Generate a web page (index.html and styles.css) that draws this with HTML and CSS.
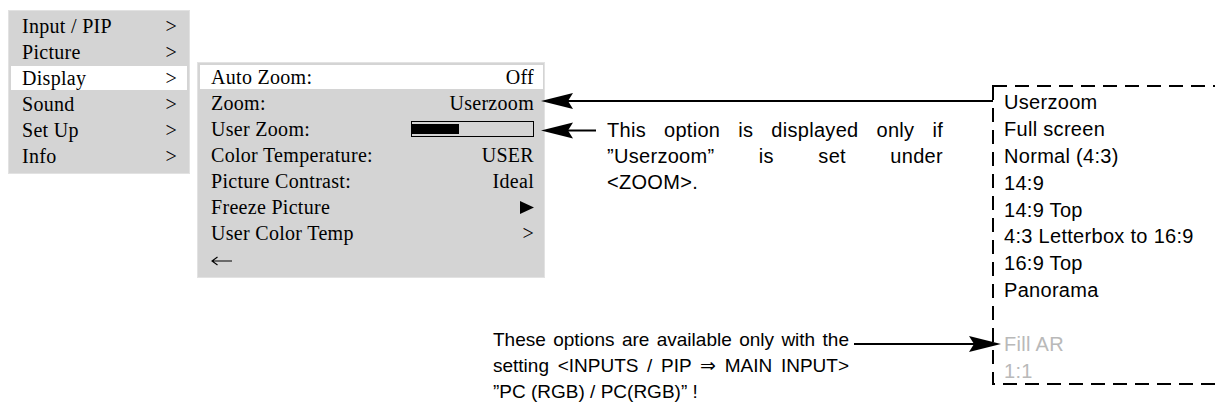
FILE: index.html
```html
<!DOCTYPE html>
<html lang="en">
<head>
  <meta charset="UTF-8" />
  <title>Display menu – Zoom</title>
  <link rel="stylesheet" href="styles.css">
</head>
<body>

  <div class="page">
    <div class="left">
      <div class="top">
        <ul class="menu">
          <li><span>Input / PIP</span><span>&gt;</span></li>
          <li><span>Picture</span><span>&gt;</span></li>
          <li class="active"><span>Display</span><span>&gt;</span></li>
          <li><span>Sound</span><span>&gt;</span></li>
          <li><span>Set Up</span><span>&gt;</span></li>
          <li><span>Info</span><span>&gt;</span></li>
        </ul>

        <ul class="menu sub">
          <li class="active"><span>Auto Zoom:</span><span>Off</span></li>
          <li><span>Zoom:</span><span>Userzoom</span></li>
          <li><span>User Zoom:</span><span class="bar"><span class="bar-fill"></span></span></li>
          <li><span>Color Temperature:</span><span>USER</span></li>
          <li><span>Picture Contrast:</span><span>Ideal</span></li>
          <li>
            <span>Freeze Picture</span>
            <svg class="play" width="14" height="13" viewBox="0 0 14 13"><polygon points="0,0 14,6.5 0,13" /></svg>
          </li>
          <li><span>User Color Temp</span><span>&gt;</span></li>
          <li>
            <svg class="back" width="21" height="10" viewBox="0 0 21 10" aria-label="back">
              <path d="M1 5 H21 M6.5 1 L1 5 L6.5 9" fill="none" stroke="#000" stroke-width="1.1" />
            </svg>
          </li>
        </ul>

        <p class="note note-zoom">
          <span class="line">This option is displayed only if</span>
          <span class="line">”Userzoom” is set under</span>
          <span class="line last">&lt;ZOOM&gt;.</span>
        </p>
      </div>

      <p class="note note-pc">
        <span class="line">These options are available only with the</span>
        <span class="line">setting &lt;INPUTS / PIP &rArr; MAIN INPUT&gt;</span>
        <span class="line last">”PC (RGB) / PC(RGB)” !</span>
      </p>
    </div>

    <div class="options">
      <ul>
        <li>Userzoom</li>
        <li>Full screen</li>
        <li>Normal (4:3)</li>
        <li>14:9</li>
        <li>14:9 Top</li>
        <li>4:3 Letterbox to 16:9</li>
        <li>16:9 Top</li>
        <li>Panorama</li>
        <li class="spacer"></li>
        <li class="off">Fill AR</li>
        <li class="off">1:1</li>
      </ul>
      <svg class="frame" width="228" height="300" viewBox="0 0 228 300">
        <rect x="1" y="1" width="226" height="298" fill="none" stroke="#000" stroke-width="2" stroke-dasharray="14 8" />
      </svg>
    </div>

    <!-- callout arrows -->
    <svg class="arrows" width="1215" height="408" viewBox="0 0 1215 408">
      <line x1="566" y1="101" x2="993" y2="101" stroke="#000" stroke-width="2" />
      <polygon points="541,101 573,93 568,101 573,109" />

      <line x1="566" y1="130.5" x2="596" y2="130.5" stroke="#000" stroke-width="2" />
      <polygon points="541,130.5 573,122.5 568,130.5 573,138.5" />

      <line x1="854" y1="344" x2="975" y2="344" stroke="#000" stroke-width="2" />
      <polygon points="1001,344 969,336 974,344 969,352" />
    </svg>
  </div>

</body>
</html>
```

FILE: styles.css
```css
* { box-sizing: border-box; }

body {
  margin: 0;
  background: #fff;
  color: #000;
}

.page {
  position: relative;
  width: 1215px;
  height: 408px;
  overflow: hidden;
  display: flex;
  align-items: flex-start;
  padding: 10px 0 0 8px;
}

.left {
  width: 984px;
  flex-shrink: 0;
}

.top {
  display: flex;
  align-items: flex-start;
  height: 268px;
}

/* OSD menus */
.menu {
  list-style: none;
  margin: 0;
  width: 182px;
  padding: 3px 2px 5px;
  background-color: #d4d4d4;
  border: 1px solid #e2e2e2;
  display: flex;
  flex-direction: column;
  gap: 2px;
  font-family: 'Liberation Serif', 'Times New Roman', serif;
  font-size: 20px;
  letter-spacing: 0.3px;
}

.menu li {
  display: flex;
  justify-content: space-between;
  align-items: center;
  height: 24px;
  line-height: 24px;
  padding: 0 10px 0 11px;
}

.menu li.active {
  background-color: #fff;
}

.sub {
  width: 348px;
  margin-left: 7px;
  margin-top: 52px;
  padding: 2px 1px 6px 2px;
}

.sub li {
  padding: 0 9px 0 11px;
}

.bar {
  width: 123px;
  height: 16px;
  border: 1px solid #000;
  display: flex;
  align-items: center;
}

.bar-fill {
  width: 47px;
  height: 10px;
  background-color: #000;
}

.play {
  display: block;
}

.back {
  display: block;
  margin-top: 4px;
}

/* annotations */
.note {
  margin: 0;
  font-family: 'Liberation Sans', Arial, sans-serif;
  font-size: 20px;
  line-height: 26px;
}

.note .line {
  display: block;
  text-align: justify;
  text-align-last: justify;
  white-space: nowrap;
}

.note .line.last {
  text-align-last: left;
}

.note-zoom {
  width: 336px;
  margin-left: 62px;
  margin-top: 107px;
  letter-spacing: 0.3px;
}

.note-pc {
  width: 356px;
  margin-left: 485px;
  margin-top: 49px;
  font-size: 19px;
}

/* zoom options list */
.options {
  position: relative;
  flex-shrink: 0;
  width: 228px;
  height: 300px;
  margin-top: 75px;
  padding: 4px 0 0 12px;
  font-family: 'Liberation Sans', Arial, sans-serif;
  font-size: 20px;
  letter-spacing: 0.3px;
}

.options ul {
  list-style: none;
  margin: 0;
  padding: 0;
}

.options li {
  height: 26.9px;
  line-height: 26.9px;
  white-space: nowrap;
}

.options li.off {
  color: #b9b9b9;
}

.frame {
  position: absolute;
  top: 0;
  left: 0;
}

.arrows {
  position: absolute;
  top: 0;
  left: 0;
  pointer-events: none;
}
```
